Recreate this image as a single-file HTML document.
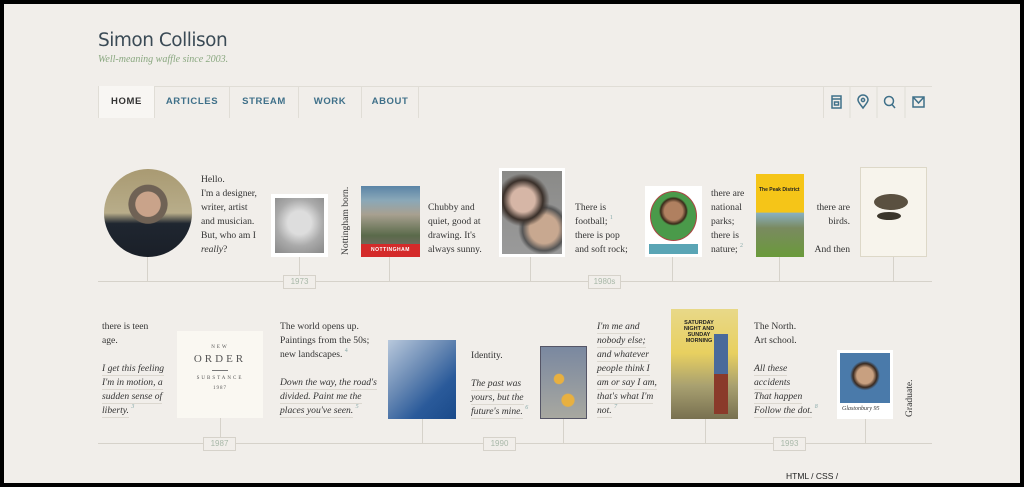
<!DOCTYPE html>
<html><head><meta charset="utf-8"><style>
*{margin:0;padding:0;box-sizing:border-box}
html,body{width:1024px;height:487px;overflow:hidden;background:#000}
#pg{position:absolute;left:4px;top:4px;width:1016px;height:479px;background:#f1eeea;overflow:hidden}
.a{position:absolute}
.t{position:absolute;font-family:"Liberation Serif",serif;font-size:9.6px;line-height:14px;color:#333;white-space:nowrap}
.t i{display:inline-block;border-bottom:1px solid #dcd8d0;line-height:13px}
.ln{position:absolute;height:1px;background:#d6d2ca}
.st{position:absolute;width:1px;background:#d6d2ca}
.yr{position:absolute;width:33px;height:14px;border:1px solid #d6d2ca;background:#f1eeea;font:8px "Liberation Sans",sans-serif;color:#a8b8a8;text-align:center;line-height:12px}
.nav{position:absolute;top:82px;height:32px;font:bold 9.5px "Liberation Sans",sans-serif;letter-spacing:.6px;color:#3f7089;text-align:center;line-height:32px;border-right:1px solid #e0ddd6}
sup{font-size:6px;color:#8aa;line-height:0;vertical-align:top;position:relative;top:3px}
.v{position:absolute;font-family:"Liberation Serif",serif;font-size:9.6px;color:#333;transform:rotate(-90deg);transform-origin:left top;white-space:nowrap}
</style></head><body><div id="pg">
<div class="a" style="left:94px;top:26px;font:18.5px 'DejaVu Sans',sans-serif;color:#3a4a55;letter-spacing:-.5px">Simon Collison</div>
<div class="a" style="left:94px;top:50px;font:italic 10px 'Liberation Serif',serif;color:#8aa880">Well-meaning waffle since 2003.</div>

<div class="a" style="left:94px;top:82px;width:834px;height:32px;border-top:1px solid #e0ddd6"></div>
<div class="nav" style="left:94px;width:57px;background:#f8f6f3;color:#333;border-left:1px solid #e0ddd6">HOME</div>
<div class="nav" style="left:151px;width:75px">ARTICLES</div>
<div class="nav" style="left:226px;width:69px">STREAM</div>
<div class="nav" style="left:295px;width:63px">WORK</div>
<div class="nav" style="left:358px;width:57px">ABOUT</div>
<div class="a" style="left:819px;top:82px;width:109px;height:32px;border-left:1px solid #e0ddd6"></div>
<svg class="a" style="left:819px;top:82px" width="109" height="32" fill="none" stroke="#3f7089" stroke-width="1.5">
<rect x="9" y="10" width="9" height="12"/><line x1="9" y1="13" x2="18" y2="13"/><rect x="11.5" y="16" width="4" height="3"/>
<line x1="27" y1="0" x2="27" y2="32" stroke="#e0ddd6" stroke-width="1"/>
<path d="M40 22c-3-4-5-6-5-8a5 5 0 0 1 10 0c0 2-2 4-5 8z"/><circle cx="40" cy="14" r="1.6"/>
<line x1="54" y1="0" x2="54" y2="32" stroke="#e0ddd6" stroke-width="1"/>
<circle cx="66" cy="15" r="4.5"/><line x1="69" y1="18.5" x2="72" y2="22"/>
<line x1="82" y1="0" x2="82" y2="32" stroke="#e0ddd6" stroke-width="1"/>
<rect x="90" y="11" width="11" height="10"/><path d="M90 11l5.5 6 5.5-6"/>
</svg>

<!-- row 1 -->
<div class="ln" style="left:94px;top:277px;width:834px"></div>
<div class="st" style="left:143px;top:253px;height:24px"></div>
<div class="st" style="left:295px;top:253px;height:24px"></div>
<div class="st" style="left:385px;top:253px;height:24px"></div>
<div class="st" style="left:526px;top:253px;height:24px"></div>
<div class="st" style="left:668px;top:253px;height:24px"></div>
<div class="st" style="left:775px;top:253px;height:24px"></div>
<div class="st" style="left:889px;top:253px;height:24px"></div>
<div class="yr" style="left:279px;top:271px">1973</div>
<div class="yr" style="left:584px;top:271px">1980s</div>

<div class="a" style="left:100px;top:165px;width:88px;height:88px;border-radius:50%;background:radial-gradient(circle at 50% 40%,#c9a38a 0 18%,#6f6255 19% 28%,transparent 29%),linear-gradient(#a99a72 0,#b8ad8a 50%,#1f2630 62%,#1a1f28 100%)"></div>
<div class="t" style="left:197px;top:169px">Hello.<br>I'm a designer,<br>writer, artist<br>and musician.<br>But, who am I<br><i style="border:0">really</i>?</div>
<div class="a" style="left:267px;top:190px;width:57px;height:63px;background:#fff;padding:4px"><div style="width:100%;height:100%;background:radial-gradient(circle at 50% 45%,#ddd 0 30%,#aaa 60%,#888 100%)"></div></div>
<div class="v" style="left:336px;top:251px">Nottingham born.</div>
<div class="a" style="left:357px;top:182px;width:59px;height:71px;background:linear-gradient(#5b84a6 0,#8aa8b8 20%,#a8a090 40%,#5a6a4a 70%,#6b6b5b 82%,#d42a2a 82%)"></div>
<div class="a" style="left:357px;top:243px;width:59px;font:bold 5px 'Liberation Sans';color:#fff;text-align:center;letter-spacing:.5px">NOTTINGHAM</div>
<div class="t" style="left:424px;top:197px">Chubby and<br>quiet, good at<br>drawing. It's<br>always sunny.</div>
<div class="a" style="left:495px;top:164px;width:66px;height:89px;background:#fff;padding:3px"><div style="width:100%;height:100%;background:radial-gradient(circle at 35% 35%,#d6b6a6 0 18%,#3a302a 30%,transparent 40%),radial-gradient(circle at 70% 70%,#c8a890 0 20%,#555 30%,transparent 36%),linear-gradient(#8a8a88,#9a9a9a)"></div></div>
<div class="t" style="left:571px;top:197px">There is<br>football; <sup>1</sup><br>there is pop<br>and soft rock;</div>
<div class="a" style="left:641px;top:182px;width:57px;height:71px;background:#fff"><div style="position:absolute;left:5px;top:5px;width:47px;height:50px;border-radius:50%;background:radial-gradient(circle at 50% 40%,#b08060 0 25%,#3a2a1a 35%,#4a9a4a 40%);border:1px solid #a44"></div><div style="position:absolute;left:4px;top:58px;width:49px;height:10px;background:#5aa5b5"></div></div>
<div class="t" style="left:707px;top:183px">there are<br>national<br>parks;<br>there is<br>nature; <sup>2</sup></div>
<div class="a" style="left:752px;top:170px;width:48px;height:83px;background:linear-gradient(#f5c518 0,#f5c518 46%,#8ab0c0 47%,#7a8a60 65%,#6a9a3a 100%)"></div>
<div class="a" style="left:755px;top:183px;font:bold 5px 'Liberation Sans';color:#222">The Peak District</div>
<div class="t" style="left:790px;top:197px;width:56px;text-align:right">there are<br>birds.<br><br>And then</div>
<div class="a" style="left:856px;top:163px;width:67px;height:90px;background:#f7f4ec;border:1px solid #ddd8c8"></div>
<div class="a" style="left:870px;top:190px;width:34px;height:16px;border-radius:50%;background:#5a5040"></div>
<div class="a" style="left:873px;top:208px;width:24px;height:8px;border-radius:50%;background:#3a352a"></div>

<!-- row 2 -->
<div class="ln" style="left:94px;top:439px;width:834px"></div>
<div class="st" style="left:216px;top:414px;height:25px"></div>
<div class="st" style="left:418px;top:415px;height:24px"></div>
<div class="st" style="left:559px;top:415px;height:24px"></div>
<div class="st" style="left:701px;top:415px;height:24px"></div>
<div class="st" style="left:861px;top:415px;height:24px"></div>
<div class="yr" style="left:199px;top:433px">1987</div>
<div class="yr" style="left:479px;top:433px">1990</div>
<div class="yr" style="left:769px;top:433px">1993</div>

<div class="t" style="left:98px;top:316px">there is teen<br>age.<br><br><em><i>I get this feeling</i><br><i>I'm in motion, a</i><br><i>sudden sense of</i><br><i>liberty.</i> <sup>3</sup></em></div>
<div class="a" style="left:173px;top:327px;width:86px;height:87px;background:#faf8f2;font-family:'Liberation Serif',serif;color:#555;text-align:center">
<div style="margin-top:14px;font-size:5px;letter-spacing:2px">NEW</div>
<div style="font-size:11px;letter-spacing:3px;margin-top:3px">ORDER</div>
<div style="width:16px;height:1px;background:#777;margin:5px auto"></div>
<div style="font-size:5px;letter-spacing:2px">SUBSTANCE</div>
<div style="font-size:5px;letter-spacing:1px;margin-top:5px">1987</div></div>
<div class="t" style="left:276px;top:316px">The world opens up.<br>Paintings from the 50s;<br>new landscapes. <sup>4</sup><br><br><em><i>Down the way, the road's</i><br><i>divided. Paint me the</i><br><i>places you've seen.</i> <sup>5</sup></em></div>
<div class="a" style="left:384px;top:336px;width:68px;height:79px;background:linear-gradient(135deg,#b8c8dc 0,#6a8ab4 40%,#2a5a9a 70%,#1a4a8a 100%)"></div>
<div class="t" style="left:467px;top:345px">Identity.<br><br><em><i>The past was</i><br><i>yours, but the</i><br><i>future's mine.</i> <sup>6</sup></em></div>
<div class="a" style="left:536px;top:342px;width:47px;height:73px;background:radial-gradient(circle at 40% 45%,#e8b040 0 10%,transparent 12%),radial-gradient(circle at 60% 75%,#e8b040 0 10%,transparent 12%),linear-gradient(#7a88a0,#a8a8a0);border:1px solid #556"></div>
<div class="t" style="left:593px;top:316px"><em><i>I'm me and</i><br><i>nobody else;</i><br><i>and whatever</i><br><i>people think I</i><br><i>am or say I am,</i><br><i>that's what I'm</i><br><i>not.</i> <sup>7</sup></em></div>
<div class="a" style="left:667px;top:305px;width:67px;height:110px;background:linear-gradient(#e8d888 0,#e8d060 40%,#a8a070 70%,#787050 100%)"></div>
<div class="a" style="left:675px;top:316px;width:40px;font:bold 5.5px 'Liberation Sans';color:#222;line-height:6px;text-align:center">SATURDAY NIGHT AND SUNDAY MORNING</div>
<div class="a" style="left:710px;top:330px;width:14px;height:80px;background:linear-gradient(#4a6a9a 0 50%,#8a3a2a 50%)"></div>
<div class="t" style="left:750px;top:316px">The North.<br>Art school.<br><br><em><i>All these</i><br><i>accidents</i><br><i>That happen</i><br><i>Follow the dot.</i> <sup>8</sup></em></div>
<div class="a" style="left:833px;top:346px;width:56px;height:69px;background:#fff;padding:3px 3px 16px"><div style="width:100%;height:100%;background:radial-gradient(circle at 50% 45%,#c8a080 0 22%,#3a2a20 32%,#4a7aaa 40%)"></div></div>
<div class="a" style="left:838px;top:402px;font:italic 6px 'Liberation Serif';color:#333">Glastonbury 95</div>
<div class="v" style="left:900px;top:413px">Graduate.</div>

<div class="a" style="left:782px;top:467px;font:8.5px 'Liberation Sans Narrow','Liberation Sans',sans-serif;color:#222">HTML / CSS /</div>
</div></body></html>
